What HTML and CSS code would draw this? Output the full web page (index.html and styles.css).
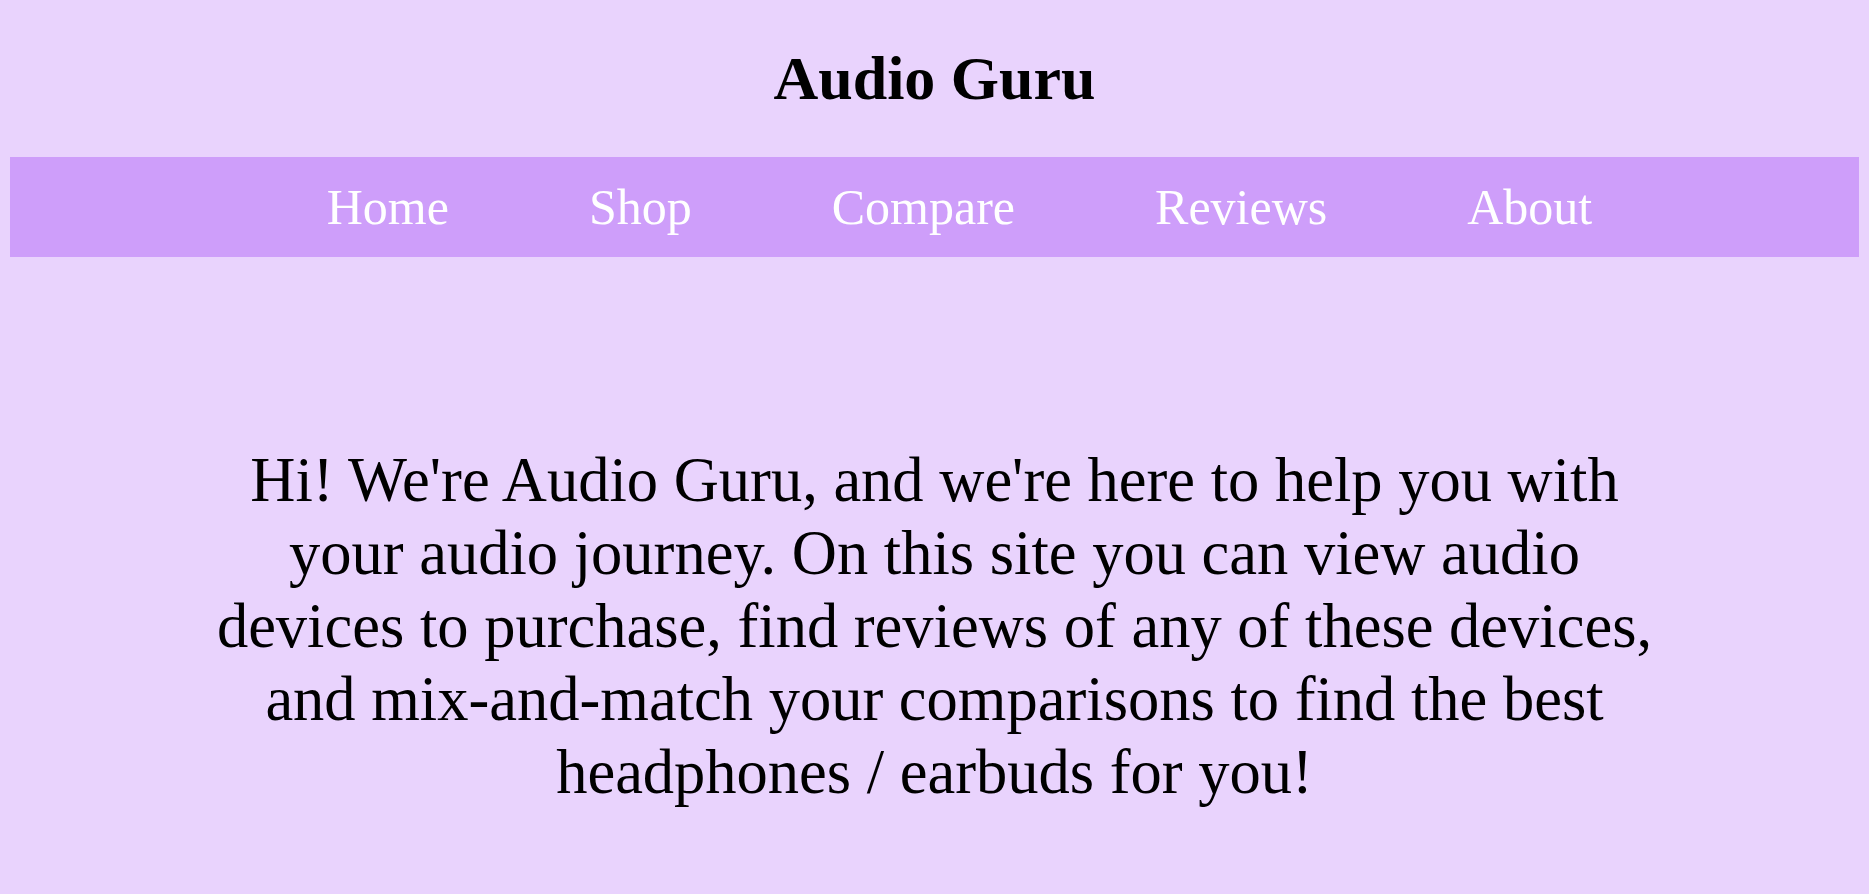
FILE: index.html
```html
<!DOCTYPE html>
<html lang="en">
<head>
<meta charset="utf-8">
<title>Audio Guru</title>
<link rel="stylesheet" href="styles.css">
</head>
<body>
<header class="site-header">
  <h1 class="site-title">Audio Guru</h1>
</header>
<nav class="main-nav">
  <ul class="nav-list">
    <li class="nav-item"><a class="nav-link" href="#">Home</a></li>
    <li class="nav-item"><a class="nav-link" href="#">Shop</a></li>
    <li class="nav-item"><a class="nav-link" href="#">Compare</a></li>
    <li class="nav-item"><a class="nav-link" href="#">Reviews</a></li>
    <li class="nav-item"><a class="nav-link" href="#">About</a></li>
  </ul>
</nav>
<main class="intro">
  <p class="intro-text">Hi! We're Audio Guru, and we're here to help you with your audio journey. On this site you can view audio devices to purchase, find reviews of any of these devices, and mix-and-match your comparisons to find the best headphones / earbuds for you!</p>
</main>
</body>
</html>
```

FILE: styles.css
```css
html {
  background: #e9d3fd;
}

body {
  margin: 0;
  padding: 0 10px;
  background: #e9d3fd;
  font-family: "Liberation Serif", "Times New Roman", serif;
  color: #000;
}

.site-header {
  padding-top: 42px;
}

.site-title {
  margin: 0;
  font-size: 62px;
  line-height: 72px;
  font-weight: bold;
  text-align: center;
}

.main-nav {
  margin-top: 43px;
  height: 100px;
  background: #ce9efa;
  display: flex;
  align-items: center;
  justify-content: center;
}

.nav-list {
  list-style: none;
  margin: 0;
  padding: 0 0 0 50px;
  display: flex;
  gap: 140px;
}

.nav-link {
  color: #fff;
  text-decoration: none;
  font-size: 50px;
}

.intro {
  display: flex;
  justify-content: center;
  margin-top: 187px;
}

.intro-text {
  margin: 0;
  width: 80%;
  font-size: 62.5px;
  line-height: 73px;
  text-align: center;
}
```
